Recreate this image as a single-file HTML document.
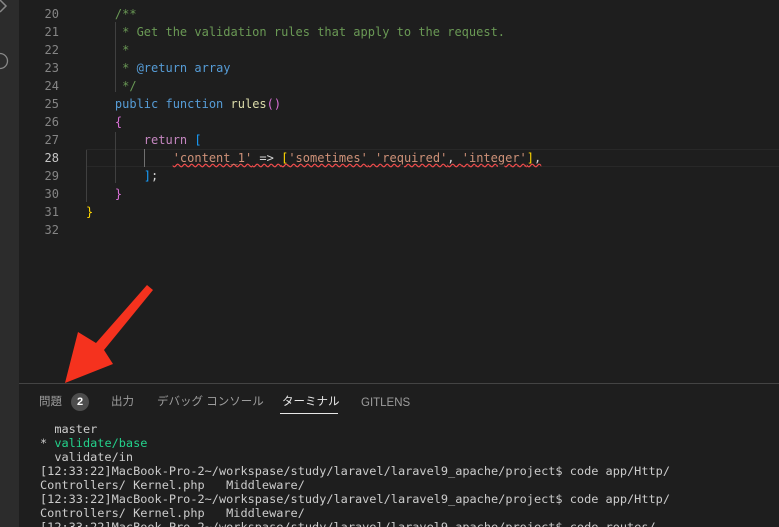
<!DOCTYPE html>
<html style="height:527px;overflow:hidden"><head><meta charset="utf-8"><style>
*{margin:0;padding:0;box-sizing:border-box}
body{width:779px;height:527px;background:#1e1e1e;overflow:hidden;position:relative;font-family:"DejaVu Sans Mono",monospace;font-size:12px}
#act{position:absolute;left:0;top:0;width:19px;height:527px;background:#2c2c2c}
.ln{position:absolute;left:30px;width:29px;text-align:right;color:#858585;height:18px;line-height:18px}
.cd{position:absolute;left:86px;height:18px;line-height:18px;white-space:pre;color:#d4d4d4}
.g{color:#6a9955}.b{color:#569cd6}.y{color:#dcdcaa}.p{color:#c586c0}.s{color:#ce9178}.br{color:#ffd700}.bl{color:#179fff}.pk{color:#da70d6}
.guide{position:absolute;width:1px;background:#404040}
#hl{position:absolute;left:86px;top:149px;width:693px;height:18px;border-top:1px solid #282828;border-bottom:1px solid #282828}
#panel{position:absolute;left:19px;top:383px;width:760px;height:144px;border-top:1px solid #444}
.tab{position:absolute;top:394px;height:16px;line-height:16px;font-family:"Liberation Sans","Noto Sans CJK JP",sans-serif;font-size:11.5px;color:#9d9d9d}
.t{position:absolute;left:40px;white-space:pre;color:#ccc;line-height:14px;font-size:11.9px}
</style></head><body>
<div id="act"><svg width="19" height="80" style="position:absolute;left:0;top:0"><path d="M0 0 L6 6 L0 12" stroke="#888" stroke-width="1.5" fill="none"/><circle cx="0" cy="61" r="7.5" stroke="#888" stroke-width="1.3" fill="none"/></svg></div>
<div id="hl"></div>
<div class="guide" style="left:86px;top:150px;height:52px"></div>
<div class="guide" style="left:115px;top:22px;height:70px"></div>
<div class="guide" style="left:115px;top:132px;height:51px"></div>
<div class="guide" style="left:144px;top:149px;height:18px;background:#707070"></div>
<div class="ln" style="top:5px">20</div><div class="cd g" style="top:5px">    /**</div>
<div class="ln" style="top:23px">21</div><div class="cd g" style="top:23px">     * Get the validation rules that apply to the request.</div>
<div class="ln" style="top:41px">22</div><div class="cd g" style="top:41px">     *</div>
<div class="ln" style="top:59px">23</div><div class="cd g" style="top:59px">     * <span class="b">@return</span> <span class="b">array</span></div>
<div class="ln" style="top:77px">24</div><div class="cd g" style="top:77px">     */</div>
<div class="ln" style="top:95px">25</div><div class="cd" style="top:95px">    <span class="b">public function</span> <span class="y">rules</span><span class="pk">()</span></div>
<div class="ln" style="top:113px">26</div><div class="cd pk" style="top:113px">    {</div>
<div class="ln" style="top:131px">27</div><div class="cd" style="top:131px">        <span class="p">return</span> <span class="bl">[</span></div>
<div class="ln" style="top:149px;color:#c6c6c6">28</div><div class="cd" style="top:149px">            <span style="text-decoration:underline wavy #f14c4c"><span class="s">'content_1'</span> =&gt; <span class="br">[</span><span class="s">'sometimes'</span> <span class="s">'required'</span>, <span class="s">'integer'</span><span class="br">]</span>,</span></div>
<div class="ln" style="top:167px">29</div><div class="cd" style="top:167px">        <span class="bl">]</span>;</div>
<div class="ln" style="top:185px">30</div><div class="cd pk" style="top:185px">    }</div>
<div class="ln" style="top:203px">31</div><div class="cd br" style="top:203px">}</div>
<div class="ln" style="top:221px">32</div>
<div id="panel"></div>
<div class="tab" style="left:39px">問題</div>
<div style="position:absolute;left:71px;top:393px;width:18px;height:18px;border-radius:9px;background:#4d4d4d;color:#fff;font-family:'Liberation Sans',sans-serif;font-size:11px;font-weight:bold;text-align:center;line-height:18px">2</div>
<div class="tab" style="left:111px">出力</div>
<div class="tab" style="left:157px">デバッグ コンソール</div>
<div class="tab" style="left:282px;color:#e7e7e7">ターミナル</div>
<div style="position:absolute;left:280px;top:413px;width:58px;height:1px;background:#e7e7e7"></div>
<div class="tab" style="left:361px;top:395px">GITLENS</div>
<div class="t" style="top:422px">  master</div>
<div class="t" style="top:436px">* <span style="color:#23d18b">validate/base</span></div>
<div class="t" style="top:450px">  validate/in</div>
<div class="t" style="top:464px">[12:33:22]MacBook-Pro-2~/workspase/study/laravel/laravel9_apache/project$ code app/Http/</div>
<div class="t" style="top:478px">Controllers/ Kernel.php   Middleware/</div>
<div class="t" style="top:492px">[12:33:22]MacBook-Pro-2~/workspase/study/laravel/laravel9_apache/project$ code app/Http/</div>
<div class="t" style="top:506px">Controllers/ Kernel.php   Middleware/</div>
<div class="t" style="top:520px">[12:33:22]MacBook-Pro-2~/workspase/study/laravel/laravel9_apache/project$ code routes/</div>
<svg width="779" height="527" style="position:absolute;left:0;top:0"><polygon points="147,285 153,290 104,350 113,364 65,383 78,332 96,343" fill="#f5321e"/></svg>
</body></html>
